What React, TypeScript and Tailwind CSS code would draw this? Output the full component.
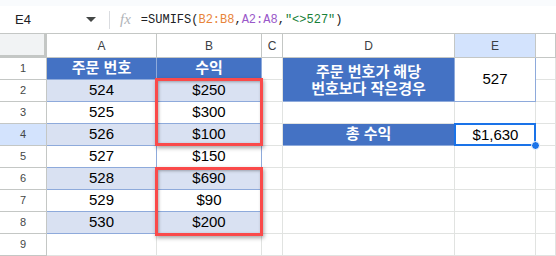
import React from 'react';

const FONT = { fontFamily: '"Liberation Sans", "Noto Sans CJK KR", Arial, sans-serif' };

type CellProps = {
  children?: React.ReactNode;
  className?: string;
};

// one grid cell, border-right + border-bottom like a sheet
function Cell({ children, className = '' }: CellProps) {
  return (
    <div className={`flex items-center justify-center border-r border-b box-border ${className}`}>
      {children}
    </div>
  );
}

const ORDERS = [524, 525, 526, 527, 528, 529, 530];
const REVENUE = ['$250', '$300', '$100', '$150', '$690', '$90', '$200'];

function ColHeader({ label, active = false }: { label: string; active?: boolean }) {
  return (
    <Cell className={`border-[#c4c7c5] text-[12px] text-[#3c4043] ${active ? 'bg-[#d3e3fd]' : 'bg-white'}`}>
      {label}
    </Cell>
  );
}

function RowHeader({ n, active = false }: { n: number; active?: boolean }) {
  return (
    <Cell className={`border-[#c4c7c5] text-[11px] text-[#444746] ${active ? 'bg-[#d3e3fd]' : 'bg-white'}`}>
      {n}
    </Cell>
  );
}

export default function App() {
  const rows = [];
  for (let r = 1; r <= 9; r++) {
    const cells: React.ReactNode[] = [];
    cells.push(<RowHeader key={`h${r}`} n={r} active={r === 4} />);

    if (r === 1) {
      cells.push(
        <Cell key="a1" className="bg-[#4472c4] border-[#8eaadb] text-white font-bold text-[15px]">주문 번호</Cell>,
        <Cell key="b1" className="bg-[#4472c4] border-[#8eaadb] text-white font-bold text-[15px]">수익</Cell>,
      );
    } else if (r <= 8) {
      const shade = r % 2 === 0 ? 'bg-[#d9e1f2]' : 'bg-white';
      cells.push(
        <Cell key={`a${r}`} className={`${shade} border-[#8eaadb] text-[15px] text-black`}>{ORDERS[r - 2]}</Cell>,
        <Cell key={`b${r}`} className={`${shade} border-[#8eaadb] text-[15px] text-black`}>{REVENUE[r - 2]}</Cell>,
      );
    } else {
      cells.push(
        <Cell key="a9" className="bg-white border-[#e1e3e1]" />,
        <Cell key="b9" className="bg-white border-[#e1e3e1]" />,
      );
    }

    // column C
    cells.push(<Cell key={`c${r}`} className="bg-white border-[#e1e3e1]" />);

    // columns D, E
    if (r === 1) {
      cells.push(
        <Cell key="d1" className="row-span-2 bg-[#4472c4] border-[#8eaadb] text-white font-bold text-[15px] leading-[17px] text-center">
          주문 번호가 해당<br />번호보다 작은경우
        </Cell>,
        <Cell key="e1" className="row-span-2 bg-white border-[#8eaadb] text-[15px] text-black">527</Cell>,
      );
    } else if (r === 2) {
      // merged above
    } else if (r === 4) {
      cells.push(
        <Cell key="d4" className="bg-[#4472c4] border-[#8eaadb] text-white font-bold text-[15px]">총 수익</Cell>,
        <div key="e4" className="relative flex items-center justify-center bg-white text-[15px] text-black">
          $1,630
          <div className="absolute left-[-1px] top-[-1px] right-0 bottom-0 border-2 border-[#1a73e8]" />
          <div className="absolute right-[-4px] bottom-[-4px] w-[9px] h-[9px] rounded-full bg-[#1a73e8] border border-white" />
        </div>,
      );
    } else {
      cells.push(
        <Cell key={`d${r}`} className="bg-white border-[#e1e3e1]" />,
        <Cell key={`e${r}`} className="bg-white border-[#e1e3e1]" />,
      );
    }

    cells.push(<Cell key={`f${r}`} className="bg-white border-[#e1e3e1]" />);
    rows.push(...cells);
  }

  return (
    <div className="relative w-[556px] h-[256px] overflow-hidden bg-white" style={FONT}>
      <div className="h-[6px] bg-[#f9fbfd]" />

      {/* formula bar */}
      <div className="h-[28px] flex items-center border-b border-[#c4c7c5] bg-white">
        <span className="ml-[15px] w-[60px] text-[13px] text-[#202124]">E4</span>
        <svg width="10" height="6" viewBox="0 0 10 6" className="ml-[11px]">
          <path d="M0 0 L10 0 L5 5 Z" fill="#444746" />
        </svg>
        <div className="ml-[13px] w-px h-[18px] bg-[#dadce0]" />
        <span className="ml-[10px] text-[15px] italic text-[#b0b3b8]" style={{ fontFamily: '"Liberation Serif", serif' }}>
          fx
        </span>
        <span className="ml-[10px] text-[12px] text-[#202124]" style={{ fontFamily: '"Liberation Mono", monospace' }}>
          =SUMIFS(<span className="text-[#e8843a]">B2:B8</span>,<span className="text-[#9a59c9]">A2:A8</span>,
          <span className="text-[#188038]">"&lt;&gt;527"</span>)
        </span>
      </div>

      {/* sheet grid */}
      <div className="grid grid-cols-[47px_110px_105px_21px_172px_81px_1fr] grid-rows-[24px_repeat(9,22px)]">
        <div className="bg-[#f1f3f4] border-r-[3px] border-b-[3px] border-[#c4c7c5]" />
        <ColHeader label="A" />
        <ColHeader label="B" />
        <ColHeader label="C" />
        <ColHeader label="D" />
        <ColHeader label="E" active />
        <ColHeader label="" />
        {rows}
      </div>

      {/* highlight boxes */}
      <div className="absolute left-[155px] top-[78px] w-[108px] h-[68px] border-[3px] border-[#fa4a4a] shadow-[1px_2px_4px_rgba(0,0,0,0.35),inset_1px_1px_3px_rgba(0,0,0,0.3)]" />
      <div className="absolute left-[155px] top-[167px] w-[108px] h-[69px] border-[3px] border-[#fa4a4a] shadow-[1px_2px_4px_rgba(0,0,0,0.35),inset_1px_1px_3px_rgba(0,0,0,0.3)]" />
    </div>
  );
}
